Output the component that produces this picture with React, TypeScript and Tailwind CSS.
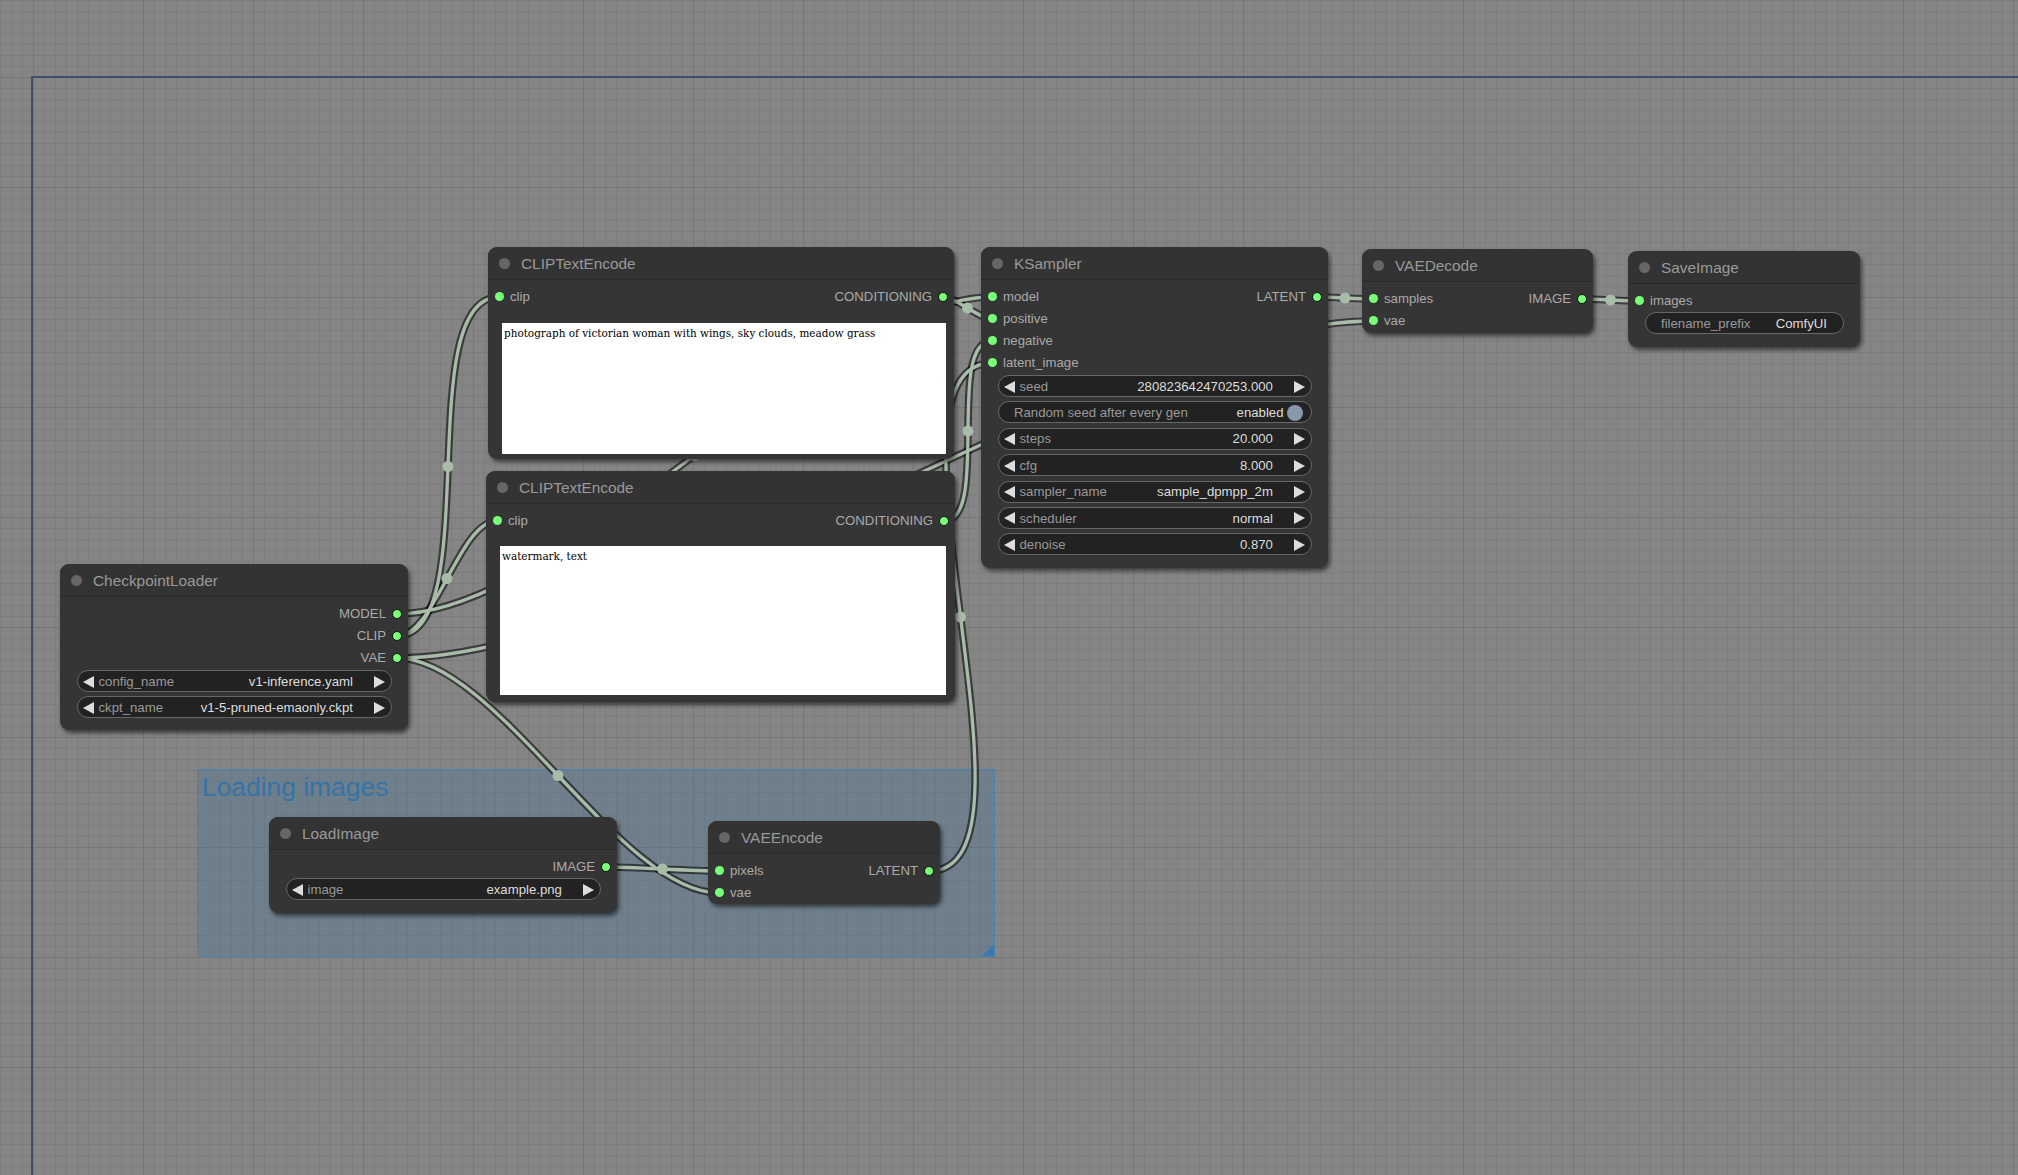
import React from "react";

type P = [number, number];

// node geometry (must match the classes used on the nodes below)
const N = {
  clip1: { x: 488, y: 247, w: 466 },
  clip2: { x: 486, y: 471, w: 469 },
  ks: { x: 981, y: 247, w: 347 },
  vdec: { x: 1362, y: 249, w: 231 },
  save: { x: 1628, y: 251, w: 232 },
  ckpt: { x: 60, y: 564, w: 348 },
  load: { x: 269, y: 817, w: 348 },
  venc: { x: 708, y: 821, w: 232 },
};
type NK = keyof typeof N;

const inp = (k: NK, i: number): P => [N[k].x + 11, N[k].y + 50 + 22 * i];
const out = (k: NK, i: number): P => [N[k].x + N[k].w - 11, N[k].y + 50 + 22 * i];

const LINKS: [P, P][] = [
  [out("ckpt", 0), inp("ks", 0)],
  [out("ckpt", 1), inp("clip1", 0)],
  [out("ckpt", 1), inp("clip2", 0)],
  [out("ckpt", 2), inp("vdec", 1)],
  [out("ckpt", 2), inp("venc", 1)],
  [out("clip1", 0), inp("ks", 1)],
  [out("clip2", 0), inp("ks", 2)],
  [out("venc", 0), inp("ks", 3)],
  [out("ks", 0), inp("vdec", 0)],
  [out("vdec", 0), inp("save", 0)],
  [out("load", 0), inp("venc", 0)],
];

function linkGeom([a, b]: [P, P]) {
  const d = Math.hypot(b[0] - a[0], b[1] - a[1]) * 0.25;
  const c1: P = [a[0] + d, a[1]];
  const c2: P = [b[0] - d, b[1]];
  const path = `M ${a[0]} ${a[1]} C ${c1[0]} ${c1[1]}, ${c2[0]} ${c2[1]}, ${b[0]} ${b[1]}`;
  const mid: P = [
    (a[0] + 3 * c1[0] + 3 * c2[0] + b[0]) / 8,
    (a[1] + 3 * c1[1] + 3 * c2[1] + b[1]) / 8,
  ];
  return { path, mid };
}

const LINK_COLOR = "#a9bba9";

function Links() {
  const g = LINKS.map(linkGeom);
  return (
    <svg className="absolute left-0 top-0" width={2018} height={1175}>
      {g.map((l, i) => (
        <path key={"b" + i} d={l.path} fill="none" stroke="rgba(0,0,0,0.55)" strokeWidth={7.7} />
      ))}
      {g.map((l, i) => (
        <path key={"c" + i} d={l.path} fill="none" stroke={LINK_COLOR} strokeWidth={3.3} />
      ))}
      {g.map((l, i) => (
        <circle key={"m" + i} cx={l.mid[0]} cy={l.mid[1]} r={5.5} fill={LINK_COLOR} />
      ))}
    </svg>
  );
}

function Grid() {
  return (
    <svg className="absolute left-0 top-0" width={2018} height={1175}>
      <defs>
        <pattern id="minor" x={0} y={0} width={11} height={11} patternUnits="userSpaceOnUse">
          <path d="M 0 0.5 H 11 M 0.5 0 V 11" stroke="#7d7d7d" strokeWidth={1} fill="none" />
        </pattern>
        <pattern id="major" x={33} y={77} width={110} height={110} patternUnits="userSpaceOnUse">
          <path d="M 0 0.5 H 110 M 0.5 0 V 110" stroke="#777777" strokeWidth={1.2} fill="none" />
        </pattern>
      </defs>
      <rect width="2018" height="1175" fill="url(#minor)" />
      <rect width="2018" height="1175" fill="url(#major)" />
    </svg>
  );
}

function Dot({ output }: { output?: boolean }) {
  return (
    <span
      className={
        output
          ? "block w-[10px] h-[10px] rounded-full bg-[#77ff77] border border-[#111]"
          : "block w-[9px] h-[9px] rounded-full bg-[#77ff77]"
      }
    />
  );
}

function Row({ left, right }: { left?: string; right?: string }) {
  return (
    <div className="flex h-[22px] items-center justify-between text-[13.2px] text-[#aaaaaa]">
      <div className="flex items-center">
        {left !== undefined && (
          <>
            <span className="ml-[6.5px]">
              <Dot />
            </span>
            <span className="ml-[6.5px]">{left}</span>
          </>
        )}
      </div>
      <div className="flex items-center">
        {right !== undefined && (
          <>
            <span className="mr-[6px]">{right}</span>
            <span className="mr-[6px]">
              <Dot output />
            </span>
          </>
        )}
      </div>
    </div>
  );
}

function Arrow({ dir }: { dir: "l" | "r" }) {
  return (
    <svg width={11} height={12} viewBox="0 0 11 12" className="shrink-0">
      <polygon points={dir === "l" ? "11,0 0,6 11,12" : "0,0 11,6 0,12"} fill="#dddddd" />
    </svg>
  );
}

function Combo({ label, value }: { label: string; value: string }) {
  return (
    <div className="mx-[16.5px] flex h-[22px] items-center rounded-full border border-[#666666] bg-[#222222] pt-[1px] text-[13.2px]">
      <span className="ml-[5.6px] flex">
        <Arrow dir="l" />
      </span>
      <span className="ml-[4.4px] text-[#999999]">{label}</span>
      <span className="flex-1" />
      <span className="text-[#dddddd]">{value}</span>
      <span className="ml-[21px] mr-[5.6px] flex">
        <Arrow dir="r" />
      </span>
    </div>
  );
}

function Toggle({ label, value }: { label: string; value: string }) {
  return (
    <div className="mx-[16.5px] flex h-[22px] items-center rounded-full border border-[#666666] bg-[#222222] pt-[1px] text-[13.2px]">
      <span className="ml-[15.5px] text-[#999999]">{label}</span>
      <span className="flex-1" />
      <span className="text-[#dddddd]">{value}</span>
      <span className="ml-[3px] mr-[8px] block h-[16px] w-[16px] rounded-full bg-[#8899aa]" />
    </div>
  );
}

function TextW({ label, value }: { label: string; value: string }) {
  return (
    <div className="mx-[16.5px] flex h-[22px] items-center rounded-full border border-[#666666] bg-[#222222] pt-[1px] text-[13.2px]">
      <span className="ml-[15.5px] text-[#999999]">{label}</span>
      <span className="flex-1" />
      <span className="mr-[15.5px] text-[#dddddd]">{value}</span>
    </div>
  );
}

function Node({
  title,
  className,
  children,
}: {
  title: string;
  className: string;
  children: React.ReactNode;
}) {
  return (
    <div
      className={
        "absolute flex flex-col rounded-[9px] bg-[#353535] shadow-[2px_3px_4px_rgba(0,0,0,0.55)] " + className
      }
    >
      <div className="flex h-[33px] shrink-0 items-center rounded-t-[9px] border-b border-[#2b2b2b] bg-[#333333]">
        <span className="ml-[11px] block h-[11px] w-[11px] rounded-full bg-[#666666]" />
        <span className="ml-[11px] pt-[2px] text-[15.4px] text-[#999999]">{title}</span>
      </div>
      {children}
    </div>
  );
}

export default function App() {
  return (
    <div className="relative h-[1175px] w-[2018px] overflow-hidden bg-[#858585] font-['Liberation_Sans',Arial,sans-serif]">
      <Grid />

      {/* big outer frame */}
      <div className="absolute bottom-0 left-[31px] right-0 top-[76px] border-l-2 border-t-2 border-[#3e4c6e]" />

      {/* Loading images group */}
      <div className="absolute left-[197px] top-[769px] h-[188px] w-[798px] border border-[#4a86b2] bg-[#3f789e]/30">
        <div className="pl-[4px] pt-[4px] text-[26.4px] leading-none text-[#3474a8]">Loading images</div>
        <div className="absolute bottom-0 right-0 h-0 w-0 border-b-[12px] border-l-[12px] border-b-[#3a78ad] border-l-transparent" />
      </div>

      <Links />

      {/* CLIPTextEncode (positive) */}
      <Node title="CLIPTextEncode" className="left-[488px] top-[247px] h-[212px] w-[466px]">
        <div className="pt-[6px]">
          <Row left="clip" right="CONDITIONING" />
        </div>
        <div className="ml-[14px] mr-[8px] mt-[15px] h-[131px] bg-white px-[2px] pt-[2px] font-['DejaVu_Serif',serif] text-[11.6px] leading-[17px] text-black font-stretch-condensed">
          photograph of victorian woman with wings, sky clouds, meadow grass
        </div>
      </Node>

      {/* CLIPTextEncode (negative) */}
      <Node title="CLIPTextEncode" className="left-[486px] top-[471px] h-[231px] w-[469px]">
        <div className="pt-[6px]">
          <Row left="clip" right="CONDITIONING" />
        </div>
        <div className="ml-[14px] mr-[9px] mt-[14px] h-[149px] bg-white px-[2px] pt-[2px] font-['DejaVu_Serif',serif] text-[11.6px] leading-[17px] text-black font-stretch-condensed">
          watermark, text
        </div>
      </Node>

      {/* KSampler */}
      <Node title="KSampler" className="left-[981px] top-[247px] h-[321px] w-[347px]">
        <div className="pt-[6px]">
          <Row left="model" right="LATENT" />
          <Row left="positive" />
          <Row left="negative" />
          <Row left="latent_image" />
        </div>
        <div className="mt-[1px] flex flex-col gap-[4.4px]">
          <Combo label="seed" value="280823642470253.000" />
          <Toggle label="Random seed after every gen" value="enabled" />
          <Combo label="steps" value="20.000" />
          <Combo label="cfg" value="8.000" />
          <Combo label="sampler_name" value="sample_dpmpp_2m" />
          <Combo label="scheduler" value="normal" />
          <Combo label="denoise" value="0.870" />
        </div>
      </Node>

      {/* VAEDecode */}
      <Node title="VAEDecode" className="left-[1362px] top-[249px] h-[84px] w-[231px]">
        <div className="pt-[6px]">
          <Row left="samples" right="IMAGE" />
          <Row left="vae" />
        </div>
      </Node>

      {/* SaveImage */}
      <Node title="SaveImage" className="left-[1628px] top-[251px] h-[96px] w-[232px]">
        <div className="pt-[6px]">
          <Row left="images" />
        </div>
        <TextW label="filename_prefix" value="ComfyUI" />
      </Node>

      {/* CheckpointLoader */}
      <Node title="CheckpointLoader" className="left-[60px] top-[564px] h-[166px] w-[348px]">
        <div className="pt-[6px]">
          <Row right="MODEL" />
          <Row right="CLIP" />
          <Row right="VAE" />
        </div>
        <div className="mt-[1px] flex flex-col gap-[4.4px]">
          <Combo label="config_name" value="v1-inference.yaml" />
          <Combo label="ckpt_name" value="v1-5-pruned-emaonly.ckpt" />
        </div>
      </Node>

      {/* LoadImage */}
      <Node title="LoadImage" className="left-[269px] top-[817px] h-[96px] w-[348px]">
        <div className="pt-[6px]">
          <Row right="IMAGE" />
        </div>
        <Combo label="image" value="example.png" />
      </Node>

      {/* VAEEncode */}
      <Node title="VAEEncode" className="left-[708px] top-[821px] h-[83px] w-[232px]">
        <div className="pt-[6px]">
          <Row left="pixels" right="LATENT" />
          <Row left="vae" />
        </div>
      </Node>
    </div>
  );
}
